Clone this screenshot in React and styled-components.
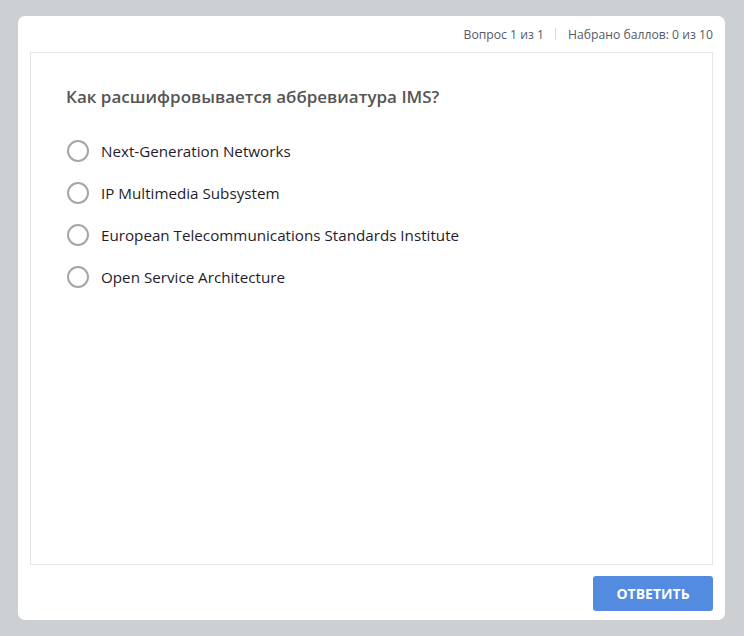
import React from 'react'
import styled, { createGlobalStyle } from 'styled-components'

const Global = createGlobalStyle`
body {
  margin: 0;
  background: #cdd0d3;
  font-family: "Open Sans", "Noto Sans", sans-serif;
}
`

const Page = styled.div`
padding: 16px 18px 16px 18px;
`

const Card = styled.div`
background: #fff;
border-radius: 7px;
width: 707px;
height: 604px;
box-sizing: border-box;
padding: 0 12px 0 12px;
display: flex;
flex-direction: column;
`

const Header = styled.div`
height: 36px;
display: flex;
justify-content: flex-end;
align-items: center;
font-size: 12.2px;
color: #555b66;
box-sizing: border-box;
`

const Divider = styled.span`
width: 1px;
height: 12px;
background: #dcdcdc;
margin: 0 12px 0 11px;
`

const Body = styled.div`
flex: 1;
border: 1px solid #e6e6e6;
padding: 32px 35px;
display: flex;
flex-direction: column;
`

const Question = styled.h2`
margin: 0 0 21px;
font-size: 17px;
font-weight: 600;
color: #555;
line-height: 24px;
`

const Option = styled.label`
display: flex;
align-items: center;
height: 42px;
padding-left: 1px;
font-size: 15.2px;
color: #1f1d2b;
cursor: pointer;
`

const Radio = styled.span`
width: 22px;
height: 22px;
box-sizing: border-box;
border: 2px solid #a6a6a6;
border-radius: 50%;
margin-right: 12px;
flex-shrink: 0;
`

const Footer = styled.div`
height: 55px;
display: flex;
justify-content: flex-end;
align-items: center;
`

const Button = styled.button`
width: 120px;
height: 35px;
margin-top: 2px;
background: #538be0;
border: none;
border-radius: 3px;
color: #fff;
font-family: "Open Sans", sans-serif;
font-weight: 700;
font-size: 14px;
cursor: pointer;
`

const options = [
  'Next-Generation Networks',
  'IP Multimedia Subsystem',
  'European Telecommunications Standards Institute',
  'Open Service Architecture',
]

export default function App() {
  return (
    <Page>
      <Global />
      <Card>
        <Header>
          <span>Вопрос 1 из 1</span>
          <Divider />
          <span>Набрано баллов: 0 из 10</span>
        </Header>
        <Body>
          <Question>Как расшифровывается аббревиатура IMS?</Question>
          {options.map((o) => (
            <Option key={o}>
              <Radio />
              {o}
            </Option>
          ))}
        </Body>
        <Footer>
          <Button>ОТВЕТИТЬ</Button>
        </Footer>
      </Card>
    </Page>
  )
}
